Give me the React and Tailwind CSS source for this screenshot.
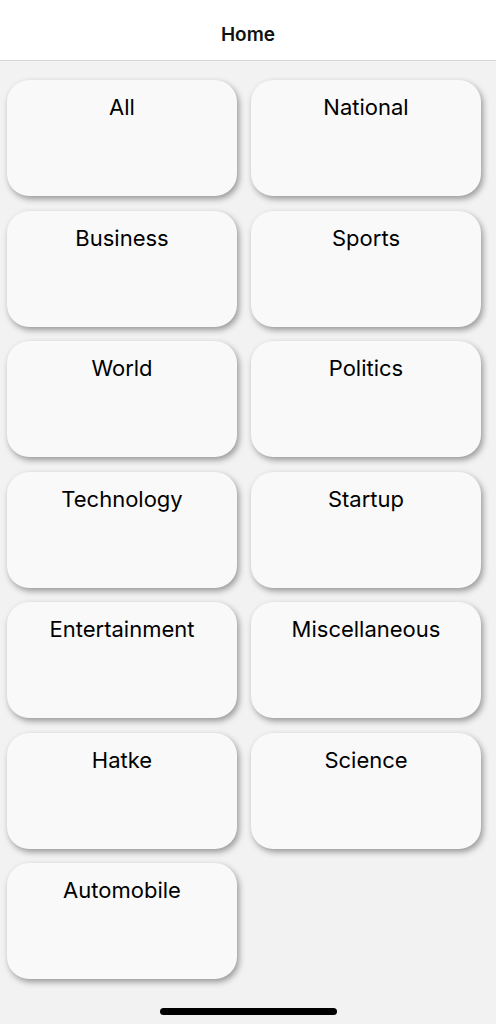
import React from 'react';

const categories = [
  'All', 'National', 'Business', 'Sports', 'World', 'Politics', 'Technology',
  'Startup', 'Entertainment', 'Miscellaneous', 'Hatke', 'Science', 'Automobile',
];

const App = () => {
  return (
    <div className="w-[496px] h-[1024px] bg-[#f2f2f2] flex flex-col overflow-hidden" style={{ fontFamily: 'Inter, "Noto Sans", sans-serif' }}>
      {/* Header */}
      <header className="h-[61px] shrink-0 bg-white border-b border-[#d6d6d6] flex items-center justify-center">
        <h1 className="text-[19px] font-semibold text-[#111] pt-[10px]">Home</h1>
      </header>

      {/* Category grid */}
      <div className="grid grid-cols-[230px_230px] gap-x-[14px] gap-y-[14.5px] pl-[7px] pt-[19px]">
        {categories.map(name => (
          <button
            key={name}
            className="h-[116px] bg-[#f9f9f9] rounded-[22px] shadow-[2px_3px_6px_rgba(0,0,0,0.38)] flex justify-center pt-[14px]"
          >
            <span className="text-[22px] leading-[27px] text-black">{name}</span>
          </button>
        ))}
      </div>

      {/* Home indicator */}
      <div className="mt-auto mb-[9px] flex justify-center">
        <div className="w-[177px] h-[7px] rounded-full bg-black" />
      </div>
    </div>
  );
};

export default App;
